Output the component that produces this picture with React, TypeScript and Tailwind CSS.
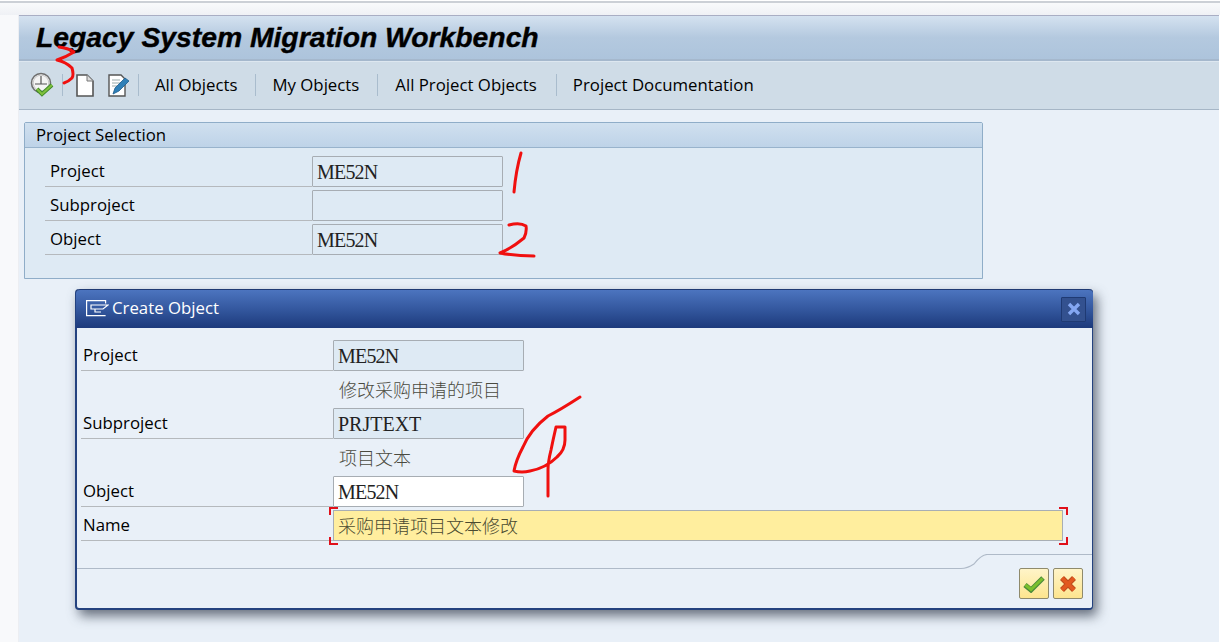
const ui = { fontFamily: '"Open Sans", "Noto Sans", sans-serif' };
const fieldFont = { fontFamily: '"Liberation Serif", "Noto Sans CJK SC", serif' };

function ClockIcon() {
  return (
    <svg width="26" height="26" viewBox="0 0 26 26">
      <circle cx="11" cy="11" r="9.5" fill="#f4f4f4" stroke="#6f6f6f" strokeWidth="1.6" />
      <circle cx="11" cy="11" r="7.8" fill="none" stroke="#c9c9c9" strokeWidth="1" />
      <path d="M11 4v8M5 12h12" stroke="#555" strokeWidth="1.2" fill="none" />
      <path d="M7 17l5 5 10-9" stroke="#3f8a2a" strokeWidth="4" fill="none" />
      <path d="M7 17l5 5 10-9" stroke="#7fc03c" strokeWidth="2" fill="none" />
    </svg>
  );
}
function PageIcon() {
  return (
    <svg width="20" height="24" viewBox="0 0 20 24">
      <path d="M2 2h10l6 6v15H2z" fill="#fff" stroke="#555" strokeWidth="1.6" />
      <path d="M12 2v6h6" fill="#ddd" stroke="#777" strokeWidth="1" />
    </svg>
  );
}
function EditIcon() {
  return (
    <svg width="22" height="24" viewBox="0 0 22 24">
      <path d="M1 2h12l4 4v17H1z" fill="#fff" stroke="#555" strokeWidth="1.4" />
      <path d="M4 7h8M4 10h9M4 13h5" stroke="#9aa" strokeWidth="1" />
      <path d="M5 21l2-6L17 5l4 3-10 10z" fill="#2f80b8" stroke="#1d5c8c" strokeWidth="0.8" />
    </svg>
  );
}
function CreateIcon() {
  return (
    <svg width="23" height="17" viewBox="0 0 23 17" fill="none" stroke="#fff" strokeWidth="1.2">
      <path d="M19.6 3.6V.6H.6v15h19" />
      <path d="M5 5h17l-5 4H5zM9 9v3h6" />
    </svg>
  );
}
function Sep() {
  return <div className="w-px h-[22px] bg-[#a9bccd]" />;
}
function TextButton({ label, left }: { label: string; left: string }) {
  return <span className={`text-[16.8px] text-black ${left}`}>{label}</span>;
}
function Field({
  value,
  width,
  tone,
  tracking,
}: {
  value: string;
  width: string;
  tone: string;
  tracking?: string;
}) {
  return (
    <div
      className={`h-[31px] ${width} ${tone} border border-[#a7adb3] rounded-[1px] pl-1 flex items-center text-[20px] leading-none text-[#222] ${tracking ?? ""}`}
      style={fieldFont}
    >
      {value}
    </div>
  );
}

function Row({
  label,
  value,
  tone,
  lineW,
  tracking,
}: {
  label: string;
  value: string;
  tone: string;
  lineW: string;
  tracking?: string;
}) {
  return (
    <div className="flex h-[31px] items-stretch">
      <div className={`${lineW} border-b border-[#b5b9bd] flex items-center text-[16.8px] text-black`}>
        {label}
      </div>
      <Field value={value} width="w-[191px]" tone={tone} tracking={tracking} />
    </div>
  );
}

function Hint({ text }: { text: string }) {
  return (
    <div
      className="h-[37px] pl-[258px] pt-[7px] text-[18px] leading-[22px] text-[#4a4a40]"
      style={{ fontFamily: '"Noto Sans CJK SC", serif', fontWeight: 300 }}
    >
      {text}
    </div>
  );
}

function Annotations() {
  return (
    <svg
      className="absolute left-0 top-0 pointer-events-none"
      width="1220"
      height="642"
      viewBox="0 0 1220 642"
      fill="none"
      stroke="#f0100f"
      strokeLinecap="round"
      strokeLinejoin="round"
    >
      <path strokeWidth="3" d="M59 47Q68 48 74 52Q66 57 57 60Q66 62 72 68Q74 75 72 78Q68 82 64 83" />
      <path strokeWidth="3" d="M521 153Q516 170 514 192" />
      <path strokeWidth="3" d="M509 225Q520 222 526 226Q527 232 524 238Q512 248 500 253Q515 256 534 256" />
      <path
        strokeWidth="3"
        d="M580 397Q560 410 548 416Q530 430 523 447Q516 460 514 471Q522 473 530 471Q546 468 557 457Q565 450 565 440L565 427L556 427Q553 440 551 450Q548 462 548 470L548 496"
      />
    </svg>
  );
}

export default function App() {
  return (
    <div className="relative w-[1220px] h-[642px] overflow-hidden bg-white" style={ui}>
      <div className="h-[3px] border-b-2 border-[#ccd0d6]" />
      <div className="h-[12px] bg-gradient-to-b from-[#f9fafb] to-[#eff1f5]" />
      <div className="flex h-[627px]">
        <div className="w-[19px] bg-[#f8f9fb] border-r border-[#eceef2]" />
        <div className="w-[1200px] bg-[#e9f0f8] flex flex-col">
          <div className="h-[46px] shrink-0 border-t border-[#a9aec4] border-b-2 border-b-[#a5b8cd] bg-gradient-to-b from-[#d4e2f0] via-[#b4c9df] to-[#adc4dc] pl-[17px] flex items-center">
            <span
              className="text-[28.3px] font-bold italic text-black leading-none [-webkit-text-stroke:0.4px_black]"
              style={{ fontFamily: '"Liberation Sans", sans-serif' }}
            >
              Legacy System Migration Workbench
            </span>
          </div>
          <div className="h-[49px] shrink-0 pb-[2px] bg-[#cfdce7] border-b border-[#a6b6c6] border-t border-t-[#dde7f0] flex items-center">
            <div className="ml-[11px]">
              <ClockIcon />
            </div>
            <div className="ml-[6px]">
              <Sep />
            </div>
            <div className="ml-[12px]">
              <PageIcon />
            </div>
            <div className="ml-[13px]">
              <EditIcon />
            </div>
            <div className="ml-[8px]">
              <Sep />
            </div>
            <TextButton label="All Objects" left="ml-[16px]" />
            <div className="ml-[18px]">
              <Sep />
            </div>
            <TextButton label="My Objects" left="ml-[16px]" />
            <div className="ml-[18px]">
              <Sep />
            </div>
            <TextButton label="All Project Objects" left="ml-[17px]" />
            <div className="ml-[19px]">
              <Sep />
            </div>
            <TextButton label="Project Documentation" left="ml-[16px]" />
          </div>

          <div className="ml-[5px] mt-[12px] w-[959px] h-[157px] border border-[#8fadc8] rounded-t-[2px] bg-[#deeaf4] shrink-0">
            <div className="h-[25px] pb-[1px] border-b border-[#98b3cc] bg-gradient-to-b from-[#d0e0ef] to-[#bed3e8] pl-[11px] flex items-center text-[16.8px] text-black">
              Project Selection
            </div>
            <div className="pl-[20px] pt-[8px] flex flex-col gap-[3px]">
              <Row label="Project" value="ME52N" tone="bg-[#deeaf4]" lineW="w-[267px] pl-[5px]" tracking="tracking-[-0.8px]" />
              <Row label="Subproject" value="" tone="bg-[#deeaf4]" lineW="w-[267px] pl-[5px]" />
              <Row label="Object" value="ME52N" tone="bg-[#deeaf4]" lineW="w-[267px] pl-[5px]" tracking="tracking-[-0.8px]" />
            </div>
          </div>
        </div>
        <div className="w-px bg-white" />
      </div>

      {/* dialog window */}
      <div className="absolute left-[75px] top-[289px] w-[1018px] h-[321px] rounded-[4px] border-l-[2px] border-r-[1px] border-b-[2px] border-[#24427f] bg-[#e9f0f8] shadow-[4px_6px_12px_rgba(60,70,85,0.75)] flex flex-col">
        <div className="-mx-[1px] h-[39px] shrink-0 rounded-t-[4px] border-t border-[#1f3a73] bg-gradient-to-b from-[#4c74bf] via-[#34589f] to-[#1d3a7c] flex items-center pl-[10px] pb-[2px] text-white text-[16.8px]">
          <CreateIcon />
          <span className="ml-[3px]">Create Object</span>
          <div className="ml-auto mr-[7px] mt-[2px] w-[25px] h-[25px] bg-[#33518f] border border-[#1f3a73] rounded-[1px] flex items-center justify-center">
            <svg width="14" height="14" viewBox="0 0 14 14">
              <path d="M2 2l10 10M12 2L2 12" stroke="#84a7f2" strokeWidth="3.4" />
            </svg>
          </div>
        </div>
        <div className="pl-[4px] pt-[12px]">
          <Row label="Project" value="ME52N" tone="bg-[#deeaf4]" lineW="w-[252px] pl-[2px]" tracking="tracking-[-0.8px]" />
          <Hint text="修改采购申请的项目" />
          <Row label="Subproject" value="PRJTEXT" tone="bg-[#deeaf4]" lineW="w-[252px] pl-[2px]" />
          <Hint text="项目文本" />
          <Row label="Object" value="ME52N" tone="bg-white" lineW="w-[252px] pl-[2px]" tracking="tracking-[-0.8px]" />
          <div className="flex h-[31px] items-stretch mt-[3px]">
            <div className="w-[252px] border-b border-[#b5b9bd] pl-[2px] flex items-center text-[16.8px] text-black">
              Name
            </div>
            <div className="relative w-[730px]">
              <div
                className="h-full bg-[#ffee9e] border border-[#a8aeb4] pl-1 flex items-center text-[18px] text-[#4a4a30]"
                style={{ fontFamily: '"Noto Sans CJK SC", serif', fontWeight: 300 }}
              >
                采购申请项目文本修改
              </div>
              <span className="absolute -left-[4px] -top-[3px] w-[9px] h-[8px] border-l-2 border-t-2 border-[#e0101a]" />
              <span className="absolute -left-[4px] -bottom-[4px] w-[9px] h-[8px] border-l-2 border-b-2 border-[#e0101a]" />
              <span className="absolute -right-[5px] -top-[3px] w-[9px] h-[8px] border-r-2 border-t-2 border-[#e0101a]" />
              <span className="absolute -right-[5px] -bottom-[4px] w-[9px] h-[8px] border-r-2 border-b-2 border-[#e0101a]" />
            </div>
          </div>
        </div>
        <div className="relative flex-1 mt-[13px]">
          <svg className="absolute left-0 top-0" width="1015" height="16" viewBox="0 0 1015 16" fill="none">
            <path d="M0 14.5H884Q890 14.5 897 10Q904 1 910 .5H1015" stroke="#afbac8" strokeWidth="1.2" />
          </svg>
          <div className="absolute right-[9px] top-[14px] flex gap-[4px]">
            <button className="w-[30px] h-[31px] rounded-[2px] border border-[#8f8a6c] bg-gradient-to-b from-[#fff4c8] to-[#fde58e] flex items-center justify-center">
              <svg width="22" height="18" viewBox="0 0 22 18">
                <path d="M2 10l6 5L20 3" stroke="#4b8a3a" strokeWidth="5" fill="none" />
                <path d="M2.5 10l5.5 4.5L19.5 3.5" stroke="#7cc02d" strokeWidth="3" fill="none" />
              </svg>
            </button>
            <button className="w-[30px] h-[31px] rounded-[2px] border border-[#8f8a6c] bg-gradient-to-b from-[#fff4c8] to-[#fde58e] flex items-center justify-center">
              <svg width="18" height="18" viewBox="0 0 18 18">
                <path d="M3 3l12 12M15 3L3 15" stroke="#bd4a1c" strokeWidth="5.6" />
                <path d="M3 3l12 12M15 3L3 15" stroke="#e2581f" strokeWidth="3.6" />
              </svg>
            </button>
          </div>
        </div>
      </div>

      <Annotations />
    </div>
  );
}
